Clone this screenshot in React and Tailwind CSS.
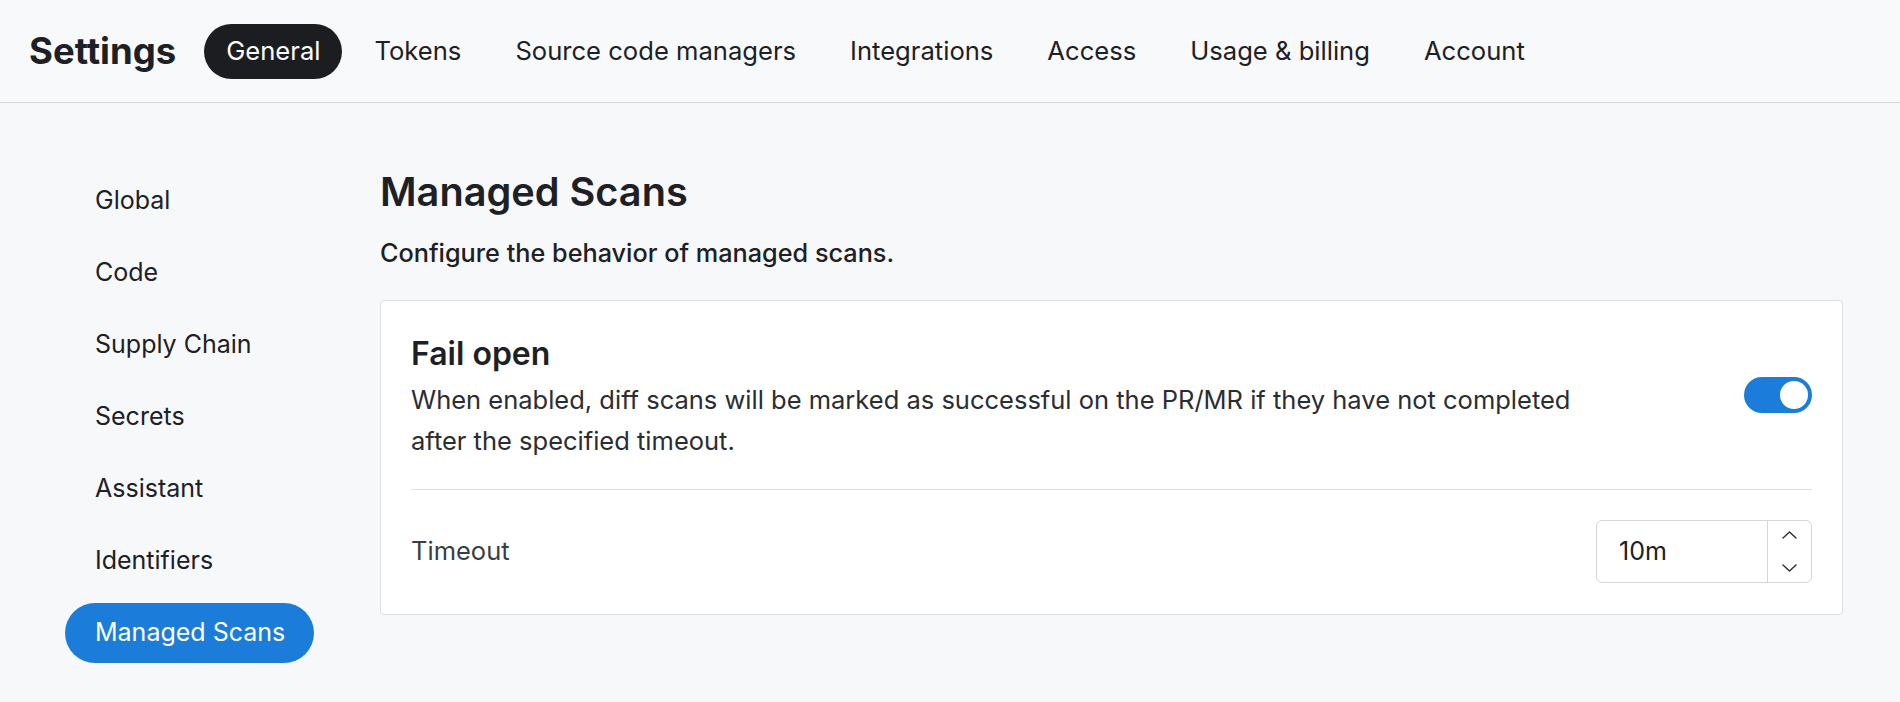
import React from "react";

const tabs = ["General", "Tokens", "Source code managers", "Integrations", "Access", "Usage & billing", "Account"];
const side = ["Global", "Code", "Supply Chain", "Secrets", "Assistant", "Identifiers", "Managed Scans"];

export default function App() {
  return (
    <div className="min-h-screen h-[702px] bg-[#f7f8fa] text-[#1d2024]" style={{ fontFamily: "Inter, 'Noto Sans', sans-serif" }}>
      <header className="h-[103px] flex items-center pl-[29px] border-b border-[#d6d9de] bg-[#f8f9fa]">
        <h1 className="text-[36.5px] font-bold mr-[28px]">Settings</h1>
        <nav className="flex items-center gap-[10px]">
          {tabs.map((t, i) => (
            <div
              key={t}
              className={
                i === 0
                  ? "h-[55px] px-[22px] flex items-center rounded-full bg-[#1c1d20] text-white text-[25.6px]"
                  : "h-[55px] px-[22px] flex items-center rounded-full text-[25.6px] text-[#1d2024]"
              }
            >
              {t}
            </div>
          ))}
        </nav>
      </header>
      <div className="flex">
        <aside className="w-[249px] ml-[65px] pt-[68px] flex flex-col gap-[12px]">
          {side.map((s, i) => (
            <div
              key={s}
              className={
                i === side.length - 1
                  ? "h-[60px] pl-[30px] flex items-center rounded-full bg-[#1b7dd9] text-white text-[25px]"
                  : "h-[60px] pl-[30px] flex items-center text-[25px] text-[#1d2024]"
              }
            >
              {s}
            </div>
          ))}
        </aside>
        <main className="ml-[66px] w-[1463px] pt-[64px]">
          <h2 className="text-[39.7px] leading-[50px] font-semibold">Managed Scans</h2>
          <p className="mt-[21px] text-[25.25px] font-medium leading-[30px]">Configure the behavior of managed scans.</p>
          <section className="mt-[32px] bg-white border border-[#dcdfe3] rounded-[4px] px-[30px] pt-[33px] pb-[31px]">
            <div className="flex items-start justify-between">
              <div className="max-w-[1180px]">
                <h3 className="text-[32px] font-semibold leading-[40px]">Fail open</h3>
                <p className="mt-[5px] text-[25.5px] leading-[41px] text-[#2a2d31]">
                  When enabled, diff scans will be marked as successful on the PR/MR if they have not completed after the specified timeout.
                </p>
              </div>
              <div className="w-[68px] h-[36px] rounded-full bg-[#1b7dd9] flex items-center justify-end pr-[4px] mt-[43px]">
                <div className="w-[28px] h-[28px] rounded-full bg-white" />
              </div>
            </div>
            <div className="mt-[28px] border-t border-[#dcdfe3]" />
            <div className="mt-[30px] flex items-center justify-between">
              <span className="text-[25.5px] text-[#3a3d42]">Timeout</span>
              <div className="w-[216px] h-[63px] border border-[#d3d7dc] rounded-[6px] flex">
                <div className="flex-1 flex items-center pl-[22px] text-[25px]">10m</div>
                <div className="w-[44px] border-l border-[#d3d7dc] flex flex-col items-center justify-center gap-[25px]">
                  <svg width="15" height="8" viewBox="0 0 15 8" fill="none" stroke="#2a2d31" strokeWidth="1.4" strokeLinecap="round" strokeLinejoin="round"><path d="M1 7l6.5-6 6.5 6" /></svg>
                  <svg width="15" height="8" viewBox="0 0 15 8" fill="none" stroke="#2a2d31" strokeWidth="1.4" strokeLinecap="round" strokeLinejoin="round"><path d="M1 1l6.5 6 6.5-6" /></svg>
                </div>
              </div>
            </div>
          </section>
        </main>
      </div>
    </div>
  );
}
